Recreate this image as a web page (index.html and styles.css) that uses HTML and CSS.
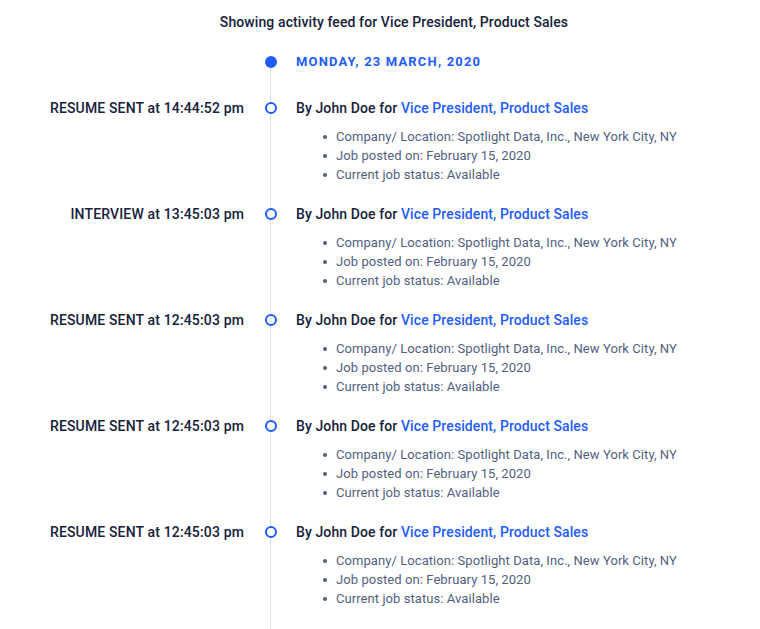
FILE: index.html
```html
<!DOCTYPE html>
<html lang="en">
	<head>
		<meta charset="UTF-8" />
		<meta name="viewport" content="width=device-width, initial-scale=1.0" />
		<title>Activity feed</title>
		<link rel="stylesheet" href="styles.css">
	</head>
	<body>
		<div class="feed">
			<p class="feed-title">Showing activity feed for Vice President, Product Sales</p>

			<div class="timeline">
				<div class="row row-date">
					<div class="label"></div>
					<div class="marker"><span class="dot dot-filled"></span></div>
					<div class="content date">MONDAY, 23 MARCH, 2020</div>
				</div>

				<div class="row">
					<div class="label">RESUME SENT at 14:44:52 pm</div>
					<div class="marker"><span class="dot"></span></div>
					<div class="content">
						<p class="entry">By John Doe for <a href="#">Vice President, Product Sales</a></p>
						<ul class="details">
							<li>Company/ Location: Spotlight Data, Inc., New York City, NY</li>
							<li>Job posted on: February 15, 2020</li>
							<li>Current job status: Available</li>
						</ul>
					</div>
				</div>

				<div class="row">
					<div class="label">INTERVIEW at 13:45:03 pm</div>
					<div class="marker"><span class="dot"></span></div>
					<div class="content">
						<p class="entry">By John Doe for <a href="#">Vice President, Product Sales</a></p>
						<ul class="details">
							<li>Company/ Location: Spotlight Data, Inc., New York City, NY</li>
							<li>Job posted on: February 15, 2020</li>
							<li>Current job status: Available</li>
						</ul>
					</div>
				</div>

				<div class="row">
					<div class="label">RESUME SENT at 12:45:03 pm</div>
					<div class="marker"><span class="dot"></span></div>
					<div class="content">
						<p class="entry">By John Doe for <a href="#">Vice President, Product Sales</a></p>
						<ul class="details">
							<li>Company/ Location: Spotlight Data, Inc., New York City, NY</li>
							<li>Job posted on: February 15, 2020</li>
							<li>Current job status: Available</li>
						</ul>
					</div>
				</div>

				<div class="row">
					<div class="label">RESUME SENT at 12:45:03 pm</div>
					<div class="marker"><span class="dot"></span></div>
					<div class="content">
						<p class="entry">By John Doe for <a href="#">Vice President, Product Sales</a></p>
						<ul class="details">
							<li>Company/ Location: Spotlight Data, Inc., New York City, NY</li>
							<li>Job posted on: February 15, 2020</li>
							<li>Current job status: Available</li>
						</ul>
					</div>
				</div>

				<div class="row">
					<div class="label">RESUME SENT at 12:45:03 pm</div>
					<div class="marker"><span class="dot"></span></div>
					<div class="content">
						<p class="entry">By John Doe for <a href="#">Vice President, Product Sales</a></p>
						<ul class="details">
							<li>Company/ Location: Spotlight Data, Inc., New York City, NY</li>
							<li>Job posted on: February 15, 2020</li>
							<li>Current job status: Available</li>
						</ul>
					</div>
				</div>
			</div>
		</div>
	</body>
</html>
```

FILE: styles.css
```css
* { margin: 0; padding: 0; box-sizing: border-box; }
html, body {
	height: 100%;
	overflow: hidden;
}
body {
	font-family: Roboto, 'Noto Sans', sans-serif;
	font-size: 14px;
	letter-spacing: 0.1px;
	color: #16213b;
	background: #fff;
}
.feed {
	height: 100%;
	display: flex;
	flex-direction: column;
	padding-top: 12px;
}
.feed-title {
	font-weight: 500;
	line-height: 20px;
	text-align: center;
	padding-left: 28px;
	margin-bottom: 20px;
}
.timeline {
	position: relative;
	flex: 1;
	overflow: hidden;
}
.timeline::before {
	content: '';
	position: absolute;
	left: 270px;
	top: 10px;
	bottom: 0;
	width: 1px;
	background: #dfe3ee;
}
.row {
	display: flex;
	margin-bottom: 20px;
}
.row-date {
	margin-bottom: 26px;
}
.label {
	width: 244px;
	text-align: right;
	font-weight: 500;
	line-height: 20px;
	letter-spacing: 0.15px;
}
.marker {
	width: 53px;
	height: 20px;
	display: flex;
	align-items: center;
	justify-content: center;
	position: relative;
}
.dot {
	width: 12px;
	height: 12px;
	border-radius: 50%;
	border: 2px solid #1f5cff;
	background: #fff;
}
.dot-filled {
	background: #1f5cff;
}
.date {
	font-weight: 700;
	font-size: 13px;
	letter-spacing: 0.09em;
	color: #1f5cff;
	line-height: 20px;
}
.content {
	margin-left: -1px;
}
.entry {
	font-weight: 500;
	line-height: 20px;
	margin-bottom: 9px;
}
.entry a {
	color: #1f5cff;
	text-decoration: none;
}
.details {
	list-style: none;
	font-size: 13px;
	letter-spacing: 0.07px;
	color: #525f7f;
	line-height: 19px;
	padding-left: 40px;
}
.details li {
	position: relative;
}
.details li::before {
	content: '';
	position: absolute;
	left: -13px;
	top: 8px;
	width: 4px;
	height: 4px;
	border-radius: 50%;
	background: #525f7f;
}
```
